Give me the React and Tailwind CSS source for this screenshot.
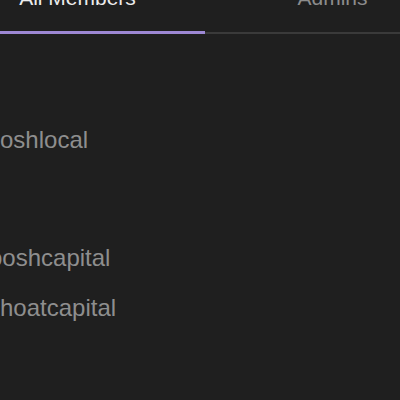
import React from 'react';

const tabs = [
  { label: 'All Members', active: true },
  { label: 'Admins', active: false },
];

const App = () => {
  return (
    <div className="w-[400px] h-[400px] overflow-hidden bg-[#1f1f1f] font-['Liberation_Sans',Arial,sans-serif]">
      {/* Tabs (cropped off on the left and top) */}
      <div className="-mt-[13px] -ml-[50px] w-[510px] flex">
        {tabs.map((tab) => (
          <div key={tab.label} className="flex-1 flex flex-col">
            <div
              className={`h-[21px] text-[21px] leading-[21px] text-center ${
                tab.active ? 'text-[#ececec]' : 'text-[#8c8c8c]'
              }`}
            >
              {tab.label}
            </div>
            <div className="h-[23px]"></div>
            {tab.active ? (
              <div className="h-[3px] bg-[#9d88d4]"></div>
            ) : (
              <div className="mt-[1px] h-[2px] bg-[#3a3a3a]"></div>
            )}
          </div>
        ))}
      </div>

      {/* Member list */}
      <div className="flex flex-col text-[24px] leading-[24px] text-[#8e8e8e]">
        <div className="mt-[94px] whitespace-nowrap">oshlocal</div>
        <div className="mt-[94px] -ml-[11px] whitespace-nowrap">ooshcapital</div>
        <div className="mt-[26px] whitespace-nowrap">hoatcapital</div>
      </div>
    </div>
  );
};

export default App;
